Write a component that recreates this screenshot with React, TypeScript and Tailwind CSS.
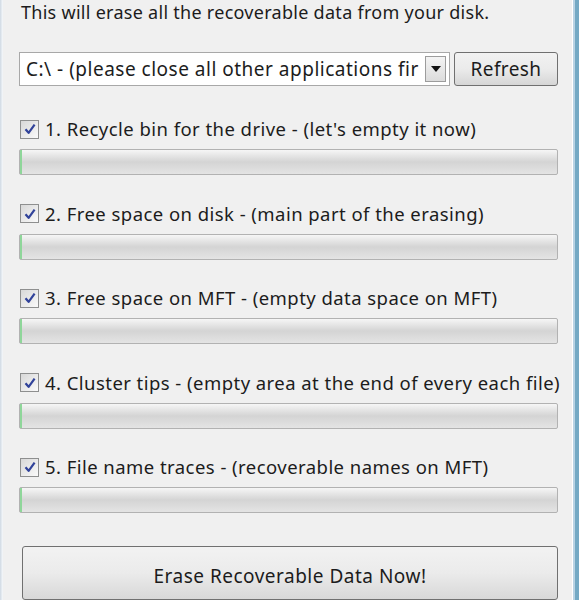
import React from 'react';

const steps = [
    '1. Recycle bin for the drive - (let\'s empty it now)',
    '2. Free space on disk - (main part of the erasing)',
    '3. Free space on MFT - (empty data space on MFT)',
    '4. Cluster tips - (empty area at the end of every each file)',
    '5. File name traces - (recoverable names on MFT)',
];

const CheckBox: React.FC = () => (
    <div className="w-[19px] h-[19px] border border-[#8e8f8f] bg-gradient-to-br from-[#d8d8d8] to-[#fafafa] flex items-center justify-center shrink-0">
        <svg viewBox="0 0 14 14" className="w-[14px] h-[14px]">
            <path d="M2.5 7.2 L5.6 10.8 L11.6 2.6" fill="none" stroke="#31439a" strokeWidth="2.2" strokeLinejoin="round" />
        </svg>
    </div>
);

const ProgressBar: React.FC = () => (
    <div className="h-[26px] rounded-[2px] border border-[#b2b2b2] bg-gradient-to-b from-[#f6f6f6] via-[#d4d4d4] to-[#e4e4e4] flex">
        <div className="w-[2px] h-full bg-[#8fd69a]" />
    </div>
);

export default function App() {
    return (
        <div
            className="w-[579px] h-[600px] overflow-hidden flex bg-[#f0f0f0] text-[#1c1c1c]"
            style={{ fontFamily: '"Noto Sans", "Open Sans", sans-serif' }}
        >
            <div className="w-[3px] shrink-0 bg-gradient-to-r from-[#cfd9e3] to-[#f7f9fb]" />
            <div className="flex-1 min-w-0 flex flex-col pl-[16px] pr-[14px]">
                <p className="text-[18px] tracking-[0.28px] leading-[22px] mt-[1px] ml-[2px] whitespace-nowrap">This will erase all the recoverable data from your disk.</p>

                <div className="flex gap-[4px] mt-[29px]">
                    <div className="flex-1 min-w-0 h-[34px] border border-[#a8a8a8] bg-white flex items-center pl-[6px] pr-[3px]">
                        <span className="flex-1 min-w-0 text-[19px] tracking-[0.5px] whitespace-nowrap overflow-hidden">C:\ - (please close all other applications fir</span>
                        <div className="w-[21px] h-[26px] shrink-0 border border-[#9c9c9c] bg-gradient-to-b from-[#f4f4f4] to-[#dcdcdc] flex items-center justify-center">
                            <svg viewBox="0 0 10 6" className="w-[10px] h-[6px]">
                                <path d="M0 0 L10 0 L5 6 Z" fill="#111" />
                            </svg>
                        </div>
                    </div>
                    <button className="w-[104px] shrink-0 h-[34px] rounded-[3px] border border-[#707070] bg-gradient-to-b from-[#f2f2f2] via-[#ebebeb] to-[#d6d6d6] text-[19px] tracking-[0.4px]">
                        Refresh
                    </button>
                </div>

                <div className="flex flex-col mt-[32px] gap-[27.5px]">
                    {steps.map((s) => (
                        <div key={s} className="flex flex-col gap-[9px]">
                            <div className="flex items-center gap-[6px] ml-[1px]">
                                <CheckBox />
                                <span className="text-[18.5px] tracking-[0.45px] leading-[22px] whitespace-nowrap">{s}</span>
                            </div>
                            <ProgressBar />
                        </div>
                    ))}
                </div>

                <button className="mt-[33px] ml-[3px] h-[64px] rounded-[3px] border border-[#707070] bg-gradient-to-b from-[#f2f2f2] via-[#ebebeb] to-[#d8d8d8] text-[19px] tracking-[0.5px] pt-[6px]">
                    Erase Recoverable Data Now!
                </button>
            </div>
            <div className="w-[7px] shrink-0 flex">
                <div className="w-[1px] bg-white" />
                <div className="w-[2px] bg-[#b9d3e4]" />
                <div className="flex-1 bg-[#74a9c4]" />
            </div>
        </div>
    );
}
